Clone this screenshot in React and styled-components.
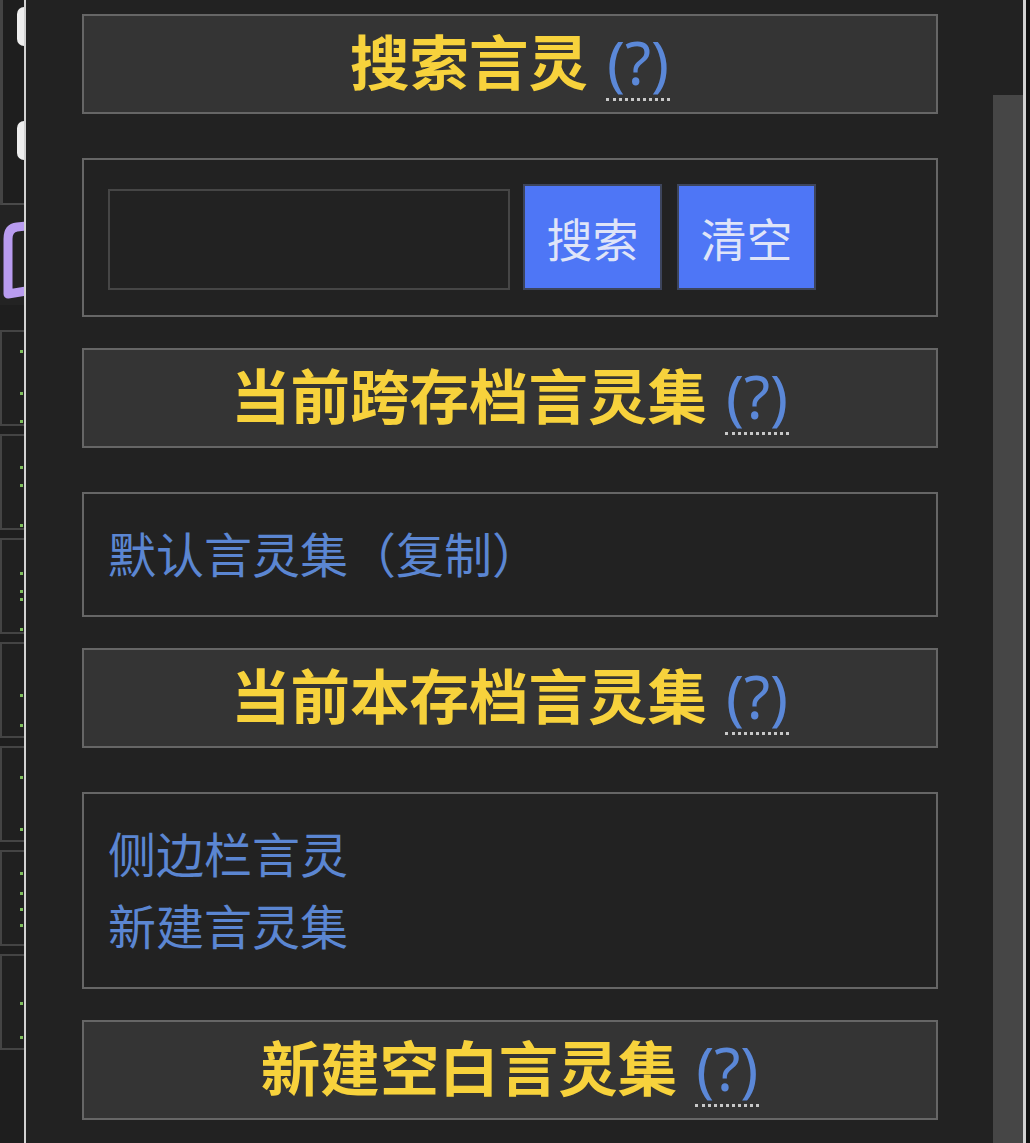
import styled, { createGlobalStyle } from 'styled-components';

const GlobalStyle = createGlobalStyle`
  html,
  body {
    margin: 0;
    padding: 0;
    background: #111;
  }

  * {
    box-sizing: border-box;
  }
`;

const sections = [
  { type: 'title', text: '搜索言灵' },
  { type: 'search' },
  { type: 'title', text: '当前跨存档言灵集' },
  { type: 'links', items: ['默认言灵集（复制）'] },
  { type: 'title', text: '当前本存档言灵集' },
  { type: 'links', items: ['侧边栏言灵', '新建言灵集'] },
  { type: 'title', text: '新建空白言灵集' },
];

const behindTiles = [
  [18, 60, 88],
  [30, 48, 88],
  [32, 50, 58, 88],
  [50, 80],
  [28, 80],
  [20, 40, 56, 72],
  [46, 80],
];

function BookEdge() {
  return (
    <svg width="24" height="100" viewBox="0 0 24 100">
      <path
        d="M26 21 L17 22 Q8 23 8 34 L8 89 L26 86"
        fill="none"
        stroke="#b99cf0"
        strokeWidth="9"
        strokeLinejoin="round"
      />
    </svg>
  );
}

export default function App() {
  return (
    <Screen>
      <GlobalStyle />
      <LeftStrip>
        <TopTile>
          <Pill />
          <Pill $gap={75} />
        </TopTile>
        <IconTile>
          <BookEdge />
        </IconTile>
        {behindTiles.map((dots, i) => (
          <Tile key={i}>
            {dots.map((top) => (
              <Dot key={top} style={{ top }} />
            ))}
          </Tile>
        ))}
      </LeftStrip>
      <Divider />
      <Panel>
        <Content>
          {sections.map((s, i) => {
            if (s.type === 'title') {
              return (
                <TitleBox key={i}>
                  <Title>{s.text}</Title>
                  <Help>(?)</Help>
                </TitleBox>
              );
            }
            if (s.type === 'search') {
              return (
                <Box key={i}>
                  <SearchRow>
                    <SearchInput type="text" />
                    <Button>搜索</Button>
                    <Button>清空</Button>
                  </SearchRow>
                </Box>
              );
            }
            return (
              <Box key={i} $list>
                {s.items.map((item) => (
                  <LinkLine key={item}>{item}</LinkLine>
                ))}
              </Box>
            );
          })}
        </Content>
        <ScrollTrack>
          <ScrollThumb />
        </ScrollTrack>
      </Panel>
      <Divider $width={3} />
      <Edge />
    </Screen>
  );
}

const Screen = styled.div`
  display: flex;
  height: 1143px;
  width: 1030px;
  overflow: hidden;
  background: #111;
  font-family: 'Noto Sans CJK SC', 'Noto Sans', sans-serif;
`;

const LeftStrip = styled.div`
  width: 24px;
  flex-shrink: 0;
  background: #1e1e1e;
  display: flex;
  flex-direction: column;
`;

const TopTile = styled.div`
  height: 205px;
  border-left: 3px solid #444;
  border-bottom: 2px solid #4a4a4a;
  display: flex;
  flex-direction: column;
  align-items: flex-end;
  padding-top: 7px;
`;

const Pill = styled.div`
  width: 7px;
  height: 39px;
  margin-top: ${({ $gap }) => $gap || 0}px;
  background: #eee;
  border-radius: 9px 0 0 9px;
`;

const IconTile = styled.div`
  height: 100px;
  margin-bottom: 25px;
  background: #232323;
`;

const Tile = styled.div`
  position: relative;
  height: 96px;
  margin-bottom: 8px;
  border: 2px solid #444;
  border-right: none;
  background: #202020;
`;

const Dot = styled.span`
  position: absolute;
  right: 1px;
  width: 3px;
  height: 3px;
  background: #7fbf5c;
`;

const Divider = styled.div`
  width: ${({ $width }) => $width || 2}px;
  flex-shrink: 0;
  background: #d2d2d2;
`;

const Edge = styled.div`
  width: 4px;
  flex-shrink: 0;
  background: #111;
`;

const Panel = styled.div`
  flex: 1;
  display: flex;
  background: #222;
`;

const Content = styled.div`
  flex: 1;
  padding: 14px 55px 0 56px;
  overflow: hidden;
`;

const ScrollTrack = styled.div`
  width: 30px;
  flex-shrink: 0;
  padding-top: 95px;
  display: flex;
  flex-direction: column;
`;

const ScrollThumb = styled.div`
  flex: 1;
  background: #464646;
`;

const TitleBox = styled.div`
  height: 100px;
  margin-bottom: 44px;
  background: #343434;
  border: 2px solid #666;
  text-align: center;
  line-height: 86px;
  white-space: nowrap;
`;

const Title = styled.span`
  color: #f7d23c;
  font-size: 59.5px;
  font-weight: 700;
`;

const Help = styled.span`
  display: inline-block;
  margin-left: 18px;
  color: #5b88d8;
  font-family: 'Noto Sans', 'Noto Sans CJK SC', sans-serif;
  font-size: 60px;
  font-weight: 400;
  line-height: 72px;
  border-bottom: 3px dotted #c8c8c8;
  padding: 0 1px;
`;

const Box = styled.div`
  margin-bottom: 31px;
  border: 2px solid #666;
  background: #222;
  padding: ${({ $list }) => ($list ? '22px 24px 27px' : '24px 24px 25px')};
`;

const SearchRow = styled.div`
  display: flex;
  align-items: flex-end;
  gap: 13px;
`;

const SearchInput = styled.input`
  width: 402px;
  height: 101px;
  background: #222;
  border: 2px solid #464646;
  outline: none;
  color: #ddd;
  font-size: 40px;
`;

const Button = styled.button`
  width: 139px;
  height: 106px;
  margin-right: 2px;
  background: #4e76f6;
  border: 2px solid #3d455c;
  color: #dfe4f8;
  font-family: 'Noto Sans CJK SC', sans-serif;
  font-size: 46px;
  padding: 0;
  cursor: pointer;
`;

const LinkLine = styled.div`
  color: #5b86d2;
  font-size: 48px;
  line-height: 72px;
  white-space: nowrap;
`;
